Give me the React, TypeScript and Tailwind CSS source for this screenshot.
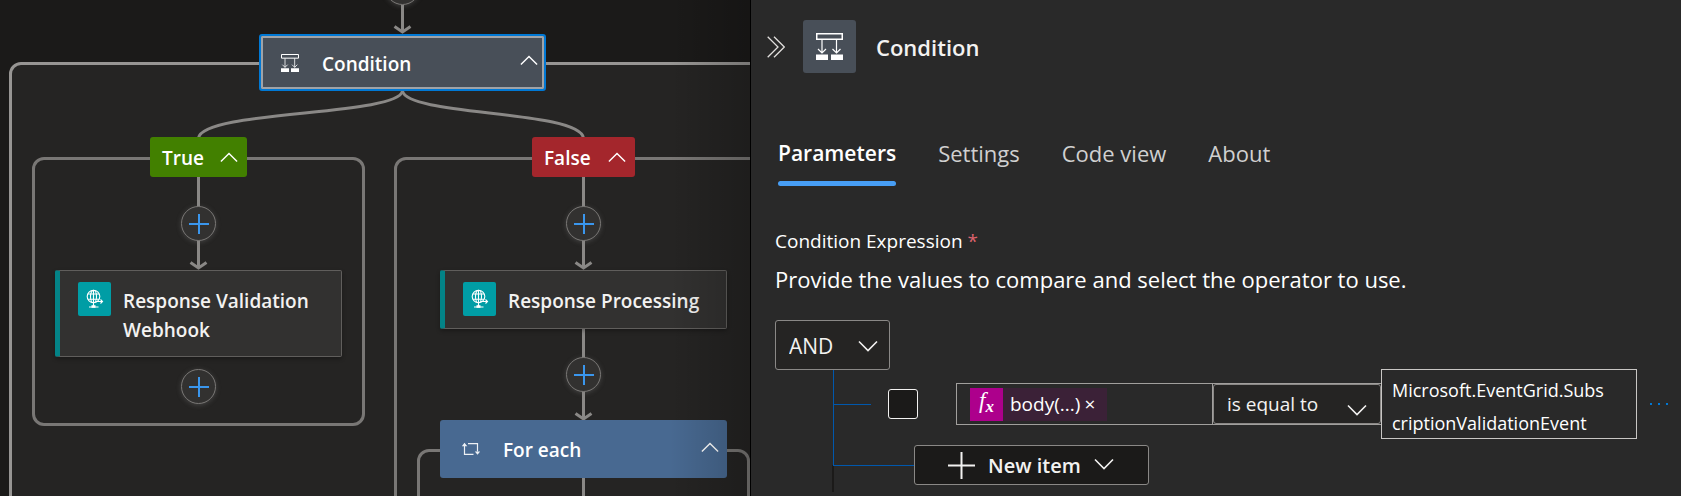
import React from "react";

const GRAY = "#8a8886";

function Chevron({ up = false, className = "" }: { up?: boolean; className?: string }) {
  return (
    <svg viewBox="0 0 20 12" className={className} fill="none" stroke="currentColor" strokeWidth="1.6" aria-hidden="true">
      <path d={up ? "M1 10.5 10 1.500 19 10.500" : "M1 1.500 10 10.500 19 1.500"} />
    </svg>
  );
}

function ConditionIcon({ className = "" }: { className?: string }) {
  return (
    <svg viewBox="0 0 27 27" className={className} fill="none" stroke="currentColor" aria-hidden="true">
      <path d="M.75.750h25.500v5.500H.75z" strokeWidth="1.500" />
      <path d="M6 6.500v13.500M20.500 6.500v13.500M2 16l4 4 4-4M16.500 16l4 4 4-4" strokeWidth="1.200" />
      <path d="M0 21.500h12v5.500H0zM15 21.500h12v5.500H15z" fill="currentColor" stroke="none" />
    </svg>
  );
}

function GlobeIcon() {
  return (
    <svg viewBox="0 0 18 20" className="h-5 w-[18px] text-white" fill="none" stroke="currentColor" strokeWidth="1.100" aria-hidden="true">
      <circle cx="7.500" cy="7.500" r="6.300" />
      <ellipse cx="7.500" cy="7.500" rx="3" ry="6.300" />
      <path d="M1.800 5h11.400M1.800 10.200h11.400M7.500 1.200v16M3 18h9.500M10 12.500h6.500M14.500 10.500l2 2-2 2" />
      <path d="M5.500 16.200h4v2.600h-4z" fill="currentColor" stroke="none" />
    </svg>
  );
}

function LoopIcon() {
  return (
    <svg viewBox="0 0 18 14" className="h-[14px] w-[18px] opacity-90" fill="none" stroke="currentColor" strokeWidth="1.200" aria-hidden="true">
      <path d="M6 1.600h9.500v8M11.500 12.400h-9V4" />
      <path d="M2.500.800 5.300 4.200H-.2zM15.500 12.800l2.700-3.400h-5.400z" fill="currentColor" stroke="none" />
    </svg>
  );
}

function AddButton({ className }: { className: string }) {
  return (
    <button
      type="button"
      aria-label="Add action"
      className={`absolute flex size-[35px] items-center justify-center rounded-full border border-[#797775] bg-[#323130] text-[#3a96ed] shadow-[0_1px_5px_rgba(130,130,130,0.35)] ${className}`}
    >
      <svg viewBox="0 0 20 20" className="size-5" stroke="currentColor" strokeWidth="2" aria-hidden="true">
        <path d="M10 0v20M0 10h20" />
      </svg>
    </button>
  );
}

function ActionCard({ title, className }: { title: string; className: string }) {
  return (
    <div className={`absolute flex w-[287px] gap-3 rounded-[2px] border border-l-[5px] border-[#605e5c] border-l-[#038387] bg-[#323130] pl-[18px] text-[#f3f2f1] shadow-[0_2px_4px_rgba(0,0,0,0.3)] ${className}`}>
      <span className="mt-[11px] flex h-[34px] w-[33px] shrink-0 items-center justify-center rounded-[2px] bg-[#009da5]">
        <GlobeIcon />
      </span>
      <span className="mt-4 text-[19px] leading-[29px] font-semibold">{title}</span>
    </div>
  );
}

function Canvas() {
  return (
    <section aria-label="Workflow designer" className="relative w-[751px] shrink-0 overflow-hidden border-r border-black bg-[#1b1a19]">
      <div className="absolute top-[62px] left-[9px] h-[600px] w-[900px] rounded-[12px] border-3 border-[#979593] bg-[#252423]" />
      <div className="absolute top-[157px] left-8 h-[269px] w-[333px] rounded-[12px] border-3 border-[#797775]" />
      <div className="absolute top-[157px] left-[394px] h-[500px] w-[500px] rounded-[12px] border-3 border-[#797775]" />
      <div className="absolute top-[449px] left-[417px] h-[200px] w-[333px] rounded-[12px] border-3 border-[#797775]" />

      <svg className="absolute inset-0 h-[496px] w-[751px]" fill="none" stroke={GRAY} strokeWidth="3" aria-hidden="true">
        <path d="M402.500 5v27M394.500 26.500l8 5.500 8-5.500" />
        <path d="M402.500 91C398 116 203 110 198.500 138M402.500 91C407 116 579 110 583.500 138" />
        <path d="M198.500 177v91M190.500 262.500l8 5.500 8-5.500" />
        <path d="M583.500 177v91M575.500 262.500l8 5.500 8-5.500" />
        <path d="M583.500 328v91M575.500 413.500l8 5.500 8-5.500M583.500 478v20" />
      </svg>

      <AddButton className="top-[-30px] left-[385px]" />
      <button type="button" className="absolute top-[34px] left-[259px] flex h-[57px] w-[287px] items-center rounded-[3px] border-2 border-[#0078d4] bg-[#484f58] pr-[6px] pl-5 text-white shadow-[inset_0_0_0_2px_#a0a3a7]">
        <ConditionIcon className="size-[18px]" />
        <span className="mt-[3px] ml-[23px] text-[19px] font-semibold">Condition</span>
        <Chevron up className="mb-1 ml-auto h-[11px] w-[18px]" />
      </button>
      <button type="button" className="absolute top-[137px] left-[150px] flex h-10 w-[97px] items-center justify-between rounded-[3px] bg-[#428000] pr-[9px] pl-3 text-[19px] font-semibold text-white">
        <span className="mt-[3px]">True</span>
        <Chevron up className="h-[11px] w-[18px]" />
      </button>
      <button type="button" className="absolute top-[137px] left-[532px] flex h-10 w-[103px] items-center justify-between rounded-[3px] bg-[#a4262c] pr-[9px] pl-3 text-[19px] font-semibold text-white">
        <span className="mt-[3px]">False</span>
        <Chevron up className="h-[11px] w-[18px]" />
      </button>
      <AddButton className="top-[206px] left-[181px]" />
      <AddButton className="top-[206px] left-[566px]" />
      <ActionCard title="Response Validation Webhook" className="top-[270px] left-[55px] h-[87px]" />
      <ActionCard title="Response Processing" className="top-[270px] left-[440px] h-[59px]" />
      <AddButton className="top-[369px] left-[181px]" />
      <AddButton className="top-[357px] left-[566px]" />
      <button type="button" className="absolute top-[420px] left-[440px] flex h-[58px] w-[287px] items-center rounded-[3px] bg-[#486991] pr-2 pl-[22px] text-white">
        <LoopIcon />
        <span className="mt-[3px] ml-[23px] text-[19px] font-semibold">For each</span>
        <Chevron up className="mb-1 ml-auto h-[11px] w-[18px]" />
      </button>
      <div className="pointer-events-none absolute inset-y-0 right-0 w-20 bg-linear-to-r from-transparent to-black/20" />
    </section>
  );
}

function Header() {
  return (
    <header className="flex items-center pt-5 pl-4">
      <button type="button" aria-label="Collapse panel" className="text-[#e1dfdd]">
        <svg viewBox="0 0 18 22" className="h-[22px] w-[18px]" fill="none" stroke="currentColor" strokeWidth="1.300" aria-hidden="true">
          <path d="M.7.700 11 11 .7 21.300M7 .700 17.300 11 7 21.300" />
        </svg>
      </button>
      <span className="ml-[18px] flex size-[53px] items-center justify-center rounded-[3px] bg-[#484f58] text-white">
        <ConditionIcon className="size-[27px]" />
      </span>
      <h1 className="ml-5 text-[22px] leading-[30px] font-semibold text-[#f3f2f1]">Condition</h1>
    </header>
  );
}

function Tabs() {
  return (
    <nav role="tablist" className="mt-[65px] flex gap-[42px] pl-[27px] text-[22px] leading-[30px] text-[#d0d0d0]">
      <button type="button" role="tab" aria-selected="true" className="text-[21px] font-semibold text-white">
        <span className="block pb-[13px]">Parameters</span>
        <span className="block h-[5px] rounded-full bg-[#479ef5]" />
      </button>
      <button type="button" role="tab" aria-selected="false" className="pb-[18px]">Settings</button>
      <button type="button" role="tab" aria-selected="false" className="pb-[18px]">Code view</button>
      <button type="button" role="tab" aria-selected="false" className="pb-[18px]">About</button>
    </nav>
  );
}

function ConditionRow() {
  return (
    <div className="flex items-center">
      <span className="h-px w-[38px] bg-[#0058ad]" />
      <input type="checkbox" aria-label="Select row" className="ml-[17px] size-[30px] shrink-0 appearance-none rounded-[3px] border border-[#f3f2f1] bg-[#1b1a19]" />
      <div role="textbox" aria-label="Choose a value" className="ml-[38px] flex h-[42px] w-[257px] items-center border border-[#a19f9d] pl-[13px] text-white">
        <span className="flex h-[33px] items-center bg-[#3b2137] text-[19px]">
          <span className="flex size-[33px] items-center justify-center bg-[#ad008c] font-['Liberation_Serif',serif] text-[23px] leading-none italic">
            <span className="-mt-2">f</span><span className="mt-1 text-[17px] font-bold">x</span>
          </span>
          <span className="ml-[7px]">body(...)</span>
          <button type="button" aria-label="Remove" className="mr-3 ml-1">×</button>
        </span>
      </div>
      <div className="flex h-[42px] w-[168px] items-center border-y border-[#a19f9d]">
        <div className="relative h-full w-full">
          <select aria-label="Operator" className="h-full w-full appearance-none rounded-[3px] border border-[#8a8886] bg-[#252423] pl-[13px] text-[19px] text-[#f3f2f1]">
            <option>is equal to</option>
          </select>
          <Chevron className="pointer-events-none absolute top-5 right-[14px] h-3 w-5 text-[#f3f2f1]" />
        </div>
      </div>
      <textarea
        aria-label="Comparison value"
        rows={2}
        spellCheck={false}
        defaultValue="Microsoft.EventGrid.SubscriptionValidationEvent"
        className="h-[70px] w-[256px] resize-none overflow-hidden border border-[#c8c6c4] bg-transparent py-1 pr-7 pl-[10px] text-[18px] leading-[33px] break-all text-white"
      />
      <button type="button" aria-label="More options" className="ml-3 p-0 text-[#0078d4]">
        <svg viewBox="0 0 20 4" className="h-1 w-5" fill="currentColor" aria-hidden="true">
          <path d="M1 1h2v2H1zM9 1h2v2H9zM17 1h2v2h-2z" />
        </svg>
      </button>
    </div>
  );
}

function Panel() {
  return (
    <aside aria-label="Condition details" className="min-w-0 flex-1 bg-[#292929]">
      <Header />
      <Tabs />
      <div className="mt-10 pl-6 text-white">
        <h2 className="text-[19px] leading-[30px]">
          Condition Expression <span className="text-[#dc626d]">*</span>
        </h2>
        <p className="mt-1 text-[22px] leading-[38px]">Provide the values to compare and select the operator to use.</p>
        <div className="relative mt-[22px] h-[50px] w-[115px]">
          <select aria-label="Group operator" className="h-full w-full appearance-none rounded-[3px] border border-[#8a8886] bg-[#252423] pt-1 pl-[13px] text-[21px] text-[#f3f2f1]">
            <option>AND</option>
          </select>
          <Chevron className="pointer-events-none absolute top-5 right-3 h-3 w-5 text-[#f3f2f1]" />
        </div>
        <div className="ml-[57px] flex">
          <div className="flex w-0.5 flex-col items-end">
            <span className="h-[95px] w-px shrink-0 bg-[#0058ad]" />
            <span className="h-[27px] w-0.5 bg-[#1b1a19]" />
          </div>
          <div className="-mt-px -ml-px min-w-0 flex-1">
            <ConditionRow />
            <div className="mt-[6px] flex items-center">
              <span className="h-px w-[81px] bg-[#0058ad]" />
              <button type="button" className="flex h-10 w-[235px] items-center rounded-[3px] border border-[#8a8886] bg-[#1b1a19] pl-[33px] text-[20px] font-semibold text-[#f3f2f1]">
                <svg viewBox="0 0 27 27" className="size-[27px]" stroke="currentColor" strokeWidth="2" aria-hidden="true">
                  <path d="M13.500 0v27M0 13.500h27" />
                </svg>
                <span className="mt-0.5 ml-[13px]">New item</span>
                <Chevron className="mb-0.5 ml-[13px] h-3 w-5" />
              </button>
            </div>
          </div>
        </div>
      </div>
    </aside>
  );
}

export default function App() {
  return (
    <main className="flex min-h-screen overflow-hidden bg-[#292929] font-['Open_Sans','Noto_Sans',sans-serif]">
      <Canvas />
      <Panel />
    </main>
  );
}
